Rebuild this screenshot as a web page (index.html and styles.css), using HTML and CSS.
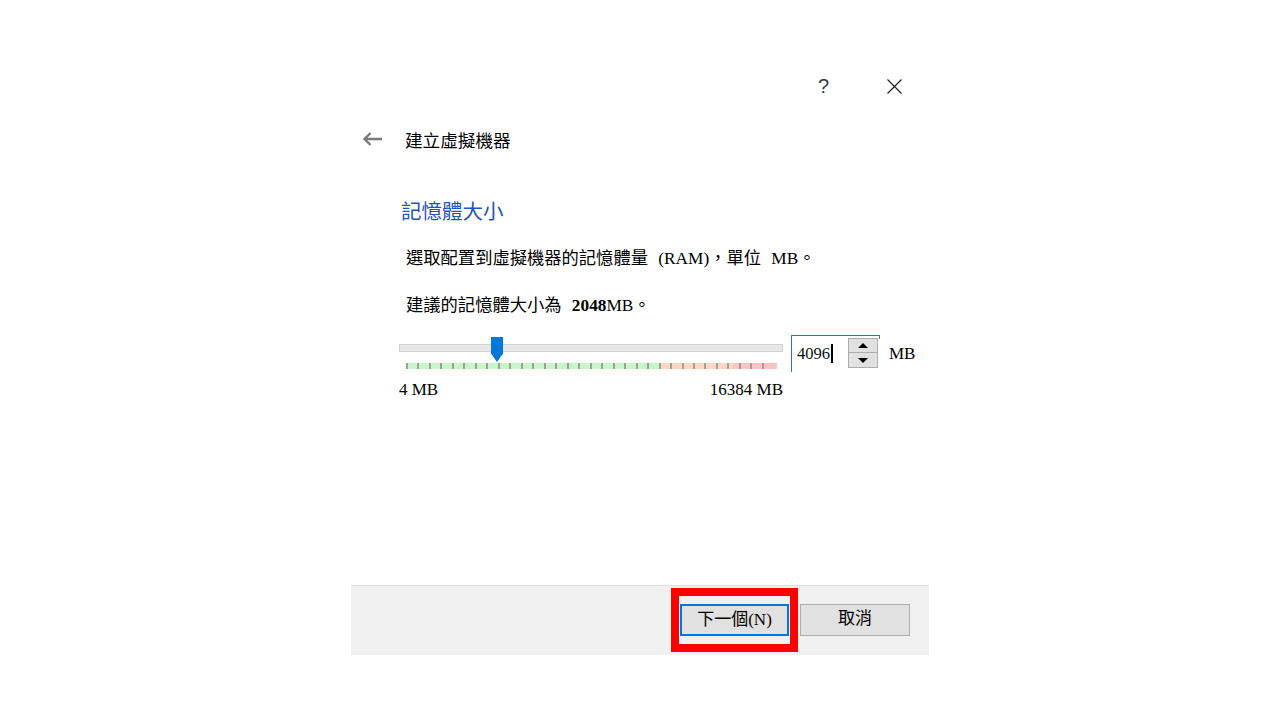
FILE: index.html
```html
<!DOCTYPE html>
<html lang="zh-Hant">
<head>
<meta charset="utf-8">
<title>建立虛擬機器</title>
<link rel="stylesheet" href="styles.css">
</head>
<body>
<div class="dialog">
  <div class="titlebar">
    <span class="help">?</span>
    <svg class="close" width="15" height="15" viewBox="0 0 15 15"><path d="M0.5 0.5L14.5 14.5M14.5 0.5L0.5 14.5" stroke="#1a1a1a" stroke-width="1.1" fill="none"/></svg>
  </div>
  <div class="header">
    <svg class="back" width="20" height="14" viewBox="0 0 20 14"><path d="M20 7H2.5M8.5 1L2.5 7L8.5 13" stroke="#7a7a7a" stroke-width="2.4" fill="none"/></svg>
    <span class="htitle">建立虛擬機器</span>
  </div>
  <div class="content">
    <h1 class="heading">記憶體大小</h1>
    <p class="desc">選取配置到虛擬機器的記憶體量 (RAM)，單位 MB。</p>
    <p class="desc">建議的記憶體大小為 <b>2048</b>MB。</p>
    <div class="slider-row">
      <div class="slider">
        <div class="track"></div>
        <div class="thumb"></div>
        <div class="scale"></div>
        <div class="limits"><span>4 MB</span><span>16384 MB</span></div>
      </div>
      <div class="spin">
        <span class="value">4096</span><span class="caret"></span>
        <div class="spin-buttons">
          <div class="spin-btn"><span class="arrow-up"></span></div>
          <div class="spin-btn"><span class="arrow-down"></span></div>
        </div>
      </div>
      <span class="unit">MB</span>
    </div>
  </div>
  <div class="footer">
    <button class="btn primary">下一個(N)</button>
    <button class="btn">取消</button>
    <div class="highlight"></div>
  </div>
</div>
</body>
</html>
```
FILE: styles.css
```css
html, body {
  margin: 0;
  padding: 0;
  background: #ffffff;
}
body {
  font-family: "Liberation Serif", "Noto Sans CJK TC", serif;
  color: #000;
  padding-top: 70px;
}
.dialog {
  width: 578px;
  height: 585px;
  margin: 0 auto;
  display: flex;
  flex-direction: column;
  background: #fff;
}
.titlebar {
  height: 32px;
  display: flex;
  align-items: center;
  justify-content: flex-end;
  padding-right: 27px;
}
.help {
  font-family: "Liberation Sans", "DejaVu Sans", sans-serif;
  font-size: 20px;
  color: #3a3a3a;
  margin-right: 58px;
  line-height: 20px;
}
.close {
  display: block;
}
.header {
  margin-top: 20px;
  height: 34px;
  display: flex;
  align-items: center;
  padding-left: 11px;
  gap: 23px;
}
.back { display: block; }
.htitle {
  font-family: "Noto Sans CJK TC", sans-serif;
  font-size: 17.6px;
}
.content {
  flex: 1;
  padding-left: 48px;
  padding-top: 40px;
}
.heading {
  margin: 0;
  font-family: "Noto Sans CJK TC", sans-serif;
  font-weight: 400;
  font-size: 20.5px;
  line-height: 28px;
  color: #1f54b8;
  padding-left: 2px;
}
.desc {
  margin: 23px 0 0 0;
  font-size: 17.3px;
  line-height: 24px;
  padding-left: 7px;
  word-spacing: 6px;
}
.desc b { font-weight: 700; }
.slider-row {
  margin-top: 17px;
  display: flex;
  align-items: flex-start;
}
.slider {
  position: relative;
  width: 384px;
}
.track {
  margin-top: 9px;
  height: 8px;
  box-sizing: border-box;
  background: #e7e7e7;
  border: 1px solid #d2d2d2;
}
.thumb {
  position: absolute;
  left: 92px;
  top: 2px;
  width: 12px;
  height: 25px;
  background: #0078d7;
  clip-path: polygon(0 0, 100% 0, 100% 66%, 50% 100%, 0 66%);
}
.scale {
  margin-top: 11px;
  margin-left: 7px;
  width: 371px;
  height: 6px;
  background:
    repeating-linear-gradient(to right, #a39f96 0, #a39f96 2px, transparent 2px, transparent 11.48px) 0 0 / 359px 100% no-repeat,
    linear-gradient(to right, #c6f7c6 0, #c6f7c6 255px, #ffd6c0 255px, #ffd6c0 327px, #ffc3c3 327px, #ffc3c3 371px);
}
.limits {
  margin-top: 11px;
  display: flex;
  justify-content: space-between;
  font-size: 17px;
  line-height: 20px;
}
.spin {
  margin-left: 8px;
  width: 89px;
  height: 37px;
  box-sizing: border-box;
  border-top: 1px solid #3a6ea5;
  border-left: 1px solid #3a6ea5;
  position: relative;
  display: flex;
  align-items: flex-start;
  padding-left: 5px;
}
.spin::after {
  content: "";
  position: absolute;
  right: 0;
  top: 0;
  width: 1px;
  height: 3px;
  background: #3a6ea5;
}
.value {
  font-size: 16.5px;
  line-height: 18px;
  margin-top: 9px;
  color: #111;
}
.caret {
  width: 2px;
  height: 19px;
  background: #000;
  margin-top: 8px;
  margin-left: 1px;
}
.spin-buttons {
  margin-left: auto;
  margin-right: 2px;
  margin-top: 2px;
  width: 30px;
  display: flex;
  flex-direction: column;
}
.spin-btn {
  height: 15px;
  box-sizing: border-box;
  background: #e1e1e1;
  border: 1px solid #adadad;
  display: flex;
  align-items: center;
  justify-content: center;
}
.spin-btn + .spin-btn { border-top: none; }
.arrow-up {
  width: 0; height: 0;
  border-left: 5px solid transparent;
  border-right: 5px solid transparent;
  border-bottom: 5px solid #000;
}
.arrow-down {
  width: 0; height: 0;
  border-left: 5px solid transparent;
  border-right: 5px solid transparent;
  border-top: 5px solid #000;
}
.unit {
  margin-left: 9px;
  font-size: 17px;
  line-height: 20px;
  margin-top: 9px;
}
.footer {
  position: relative;
  height: 70px;
  box-sizing: border-box;
  background: #f0f0f0;
  border-top: 1px solid #dfdfdf;
  display: flex;
  justify-content: flex-end;
  align-items: flex-start;
  padding-top: 18px;
  padding-right: 19px;
  gap: 11px;
}
.btn {
  height: 32px;
  width: 110px;
  box-sizing: border-box;
  background: #e1e1e1;
  border: 1px solid #adadad;
  font-family: "Liberation Serif", "Noto Sans CJK TC", serif;
  font-size: 17px;
  line-height: 28px;
  color: #000;
  padding: 0 0 2px 0;
  margin: 0;
}
.btn.primary {
  width: 109px;
  border: 2px solid #0078d7;
}
.highlight {
  position: absolute;
  left: 320px;
  top: 2px;
  width: 127px;
  height: 64px;
  box-sizing: border-box;
  border: 8px solid #ff0000;
}
```
